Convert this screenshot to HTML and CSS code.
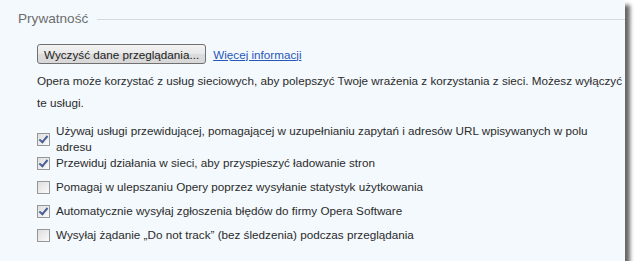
FILE: index.html
```html
<!DOCTYPE html>
<html lang="pl">
<head>
    <meta charset="UTF-8">
    <title>Prywatność</title>
    <link rel="stylesheet" href="styles.css">
</head>
<body>

    <div class="panel">
        <div class="section-title">
            <span>Prywatność</span>
            <div class="rule"></div>
        </div>

        <div class="section-body">
            <div class="actions">
                <button class="btn">Wyczyść dane przeglądania...</button>
                <a href="#" class="more">Więcej informacji</a>
            </div>

            <p class="intro">Opera może korzystać z usług sieciowych, aby polepszyć Twoje wrażenia z korzystania z sieci. Możesz wyłączyć te usługi.</p>

            <ul class="options">
                <li>
                    <span class="check on"></span>
                    <span class="label">Używaj usługi przewidującej, pomagającej w uzupełnianiu zapytań i adresów URL wpisywanych w polu adresu</span>
                </li>
                <li>
                    <span class="check on"></span>
                    <span class="label">Przewiduj działania w sieci, aby przyspieszyć ładowanie stron</span>
                </li>
                <li>
                    <span class="check"></span>
                    <span class="label">Pomagaj w ulepszaniu Opery poprzez wysyłanie statystyk użytkowania</span>
                </li>
                <li>
                    <span class="check on"></span>
                    <span class="label">Automatycznie wysyłaj zgłoszenia błędów do firmy Opera Software</span>
                </li>
                <li>
                    <span class="check"></span>
                    <span class="label">Wysyłaj żądanie „Do not track” (bez śledzenia) podczas przeglądania</span>
                </li>
            </ul>
        </div>
    </div>

</body>
</html>
```

FILE: styles.css
```css
body {
    margin: 0;
    background: #ffffff;
    font-family: "Liberation Sans", Arial, sans-serif;
    font-size: 11.7px;
    color: #2b2b2b;
}

.panel {
    width: 625px;
    height: 261px;
    box-sizing: border-box;
    background: #f3f9fd;
    box-shadow: 5px 5px 4px rgba(0, 0, 0, 0.6);
    padding: 10px 0 0 18px;
}

/* Section heading with the long line */
.section-title {
    display: flex;
    align-items: center;
    color: #6e6e6e;
    font-size: 13.6px;
    height: 16px;
}

.section-title .rule {
    flex: 1;
    height: 1px;
    background: #d3d9dd;
    margin-left: 9px;
    margin-top: 3px;
}

.section-body {
    padding-left: 19px;
    padding-top: 18px;
}

.actions {
    display: flex;
    align-items: center;
    gap: 7px;
}

.btn {
    font-family: inherit;
    font-size: 11.7px;
    color: #222;
    height: 20px;
    padding: 0 6px;
    border: 1px solid #707070;
    border-radius: 3px;
    background: linear-gradient(#f3f3f3, #e8e8e8 50%, #dcdcdc 50%, #d8d8d8);
}

.more {
    color: #2757b8;
    text-decoration: underline;
}

.intro {
    margin: 6px 0 0 0;
    line-height: 22px;
    padding-right: 2px;
}

.options {
    list-style: none;
    margin: 13px 0 0 0;
    padding: 0;
}

/* every row is 24px; a two-line label just spills over evenly */
.options li {
    display: flex;
    align-items: center;
    gap: 6px;
    height: 24px;
    line-height: 16px;
}

.check {
    flex: none;
    width: 11px;
    height: 11px;
    border: 1px solid #979797;
    background: linear-gradient(135deg, #dedede, #fbfbfb);
    position: relative;
}

.check.on::after {
    content: "";
    position: absolute;
    left: 3px;
    top: 0px;
    width: 3px;
    height: 7px;
    border: solid #4a5f97;
    border-width: 0 2px 2px 0;
    transform: rotate(40deg);
}
```
